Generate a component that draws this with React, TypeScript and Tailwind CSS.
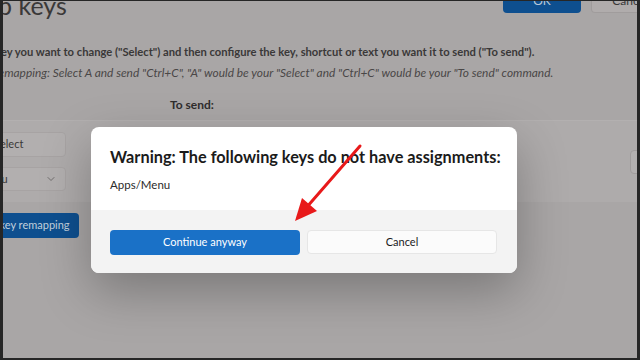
import React from 'react';
import { ChevronDown } from 'lucide-react';

const font = { fontFamily: 'Lato, "Noto Sans", sans-serif' };

function RemapPage() {
  return (
    <div className="-ml-[72px] w-[750px] pr-[12px]">
      {/* header */}
      <div className="-mt-[14px] flex h-[36px] items-start justify-between">
        <h1 className="ml-[6px] mt-[3px] text-[25px] leading-[30px] text-[#3a3838]">Remap keys</h1>
        <div className="flex gap-[10px]">
          <button className="-mt-[4px] h-[30px] w-[78px] rounded-b-[4px] bg-[#0e4f8f] pt-[6px] text-[12px] text-[#b9c8d8]">OK</button>
          <button className="-mt-[4px] h-[30px] w-[78px] rounded-b-[4px] border border-t-0 border-[#a09c9c] bg-[#b0acac] pt-[6px] text-[12px] text-[#3a3838]">Cancel</button>
        </div>
      </div>

      <p className="ml-[12px] mt-[21px] text-[11.2px] font-bold leading-[16px] text-[#3a3838]">
        Select the key you want to change ("Select") and then configure the key, shortcut or text you want it to send ("To send").
      </p>
      <p className="mt-[5px] text-[11.9px] italic leading-[16px] text-[#4a4747]">
        Example key remapping: Select A and send "Ctrl+C", "A" would be your "Select" and "Ctrl+C" would be your "To send" command.
      </p>

      <div className="mt-[15px] flex h-[18px] items-center">
        <span className="ml-[239px] text-[12px] font-bold text-[#2f2d2d]">To send:</span>
      </div>

      {/* rows */}
      <div className="mt-[6px] flex h-[82px] items-center border-t border-[#b3b0b0] bg-[#aeabab]">
        <div className="ml-[8px] flex w-[127px] flex-col gap-[10px]">
          <button className="h-[25px] rounded-[4px] border border-[#a7a3a3] bg-[#b2afaf] pl-[54px] text-left text-[11px] text-[#3a3838]">Select</button>
          <div className="flex h-[24px] items-center justify-between rounded-[4px] border border-[#a7a3a3] bg-[#b2afaf] pl-[10px] pr-[8px] text-[11px] text-[#3a3838]">
            <span>Apps/Menu</span>
            <ChevronDown className="h-[12px] w-[12px] text-[#5a5757]" strokeWidth={1.5} />
          </div>
        </div>
        <div className="ml-[564px] h-[24px] w-[26px] rounded-[4px] border border-[#a09c9c] bg-[#b2afaf]" />
      </div>

      <button className="ml-[8px] mt-[11px] h-[25px] rounded-[4px] bg-[#0e4f8f] pl-[38px] pr-[9px] text-[11px] text-[#c2cfdc]">Add key remapping</button>
    </div>
  );
}

function WarningDialog() {
  return (
    <div className="absolute left-[88px] top-[126px] w-[426px] overflow-hidden rounded-[8px] bg-white shadow-[0_18px_50px_rgba(0,0,0,0.28)]">
      <div className="h-[83px] px-[19px] pt-[16px]">
        <h2 className="whitespace-nowrap text-[16.3px] font-bold leading-[28px] text-[#1b1b1b]">Warning: The following keys do not have assignments:</h2>
        <p className="mt-[6px] text-[11.5px] leading-[16px] text-[#2b2b2b]">Apps/Menu</p>
      </div>
      <div className="flex h-[63px] gap-[7px] bg-[#f3f3f3] px-[19px] pt-[20px]">
        <button className="h-[25px] w-[190px] rounded-[4px] bg-[#1a71c7] text-[11px] text-white">Continue anyway</button>
        <button className="h-[24px] w-[190px] rounded-[4px] border border-[#e6e6e6] bg-[#fbfbfb] text-[11px] text-[#1b1b1b]">Cancel</button>
      </div>
    </div>
  );
}

function Arrow() {
  return (
    <svg className="pointer-events-none absolute left-0 top-0" width="637" height="357" viewBox="0 0 637 357">
      <line x1="357" y1="145" x2="303" y2="207" stroke="#e8191a" strokeWidth="3" strokeLinecap="round" />
      <polygon points="292,220 299,197 314,210" fill="#e8191a" />
    </svg>
  );
}

export default function App() {
  return (
    <div className="h-[360px] w-[640px] bg-[#262626] pb-[2px] pl-[3px] pr-[3px] pt-px" style={font}>
      <div className="relative h-full w-full overflow-hidden bg-[#a9a6a6]">
        <RemapPage />
        <WarningDialog />
        <Arrow />
      </div>
    </div>
  );
}
